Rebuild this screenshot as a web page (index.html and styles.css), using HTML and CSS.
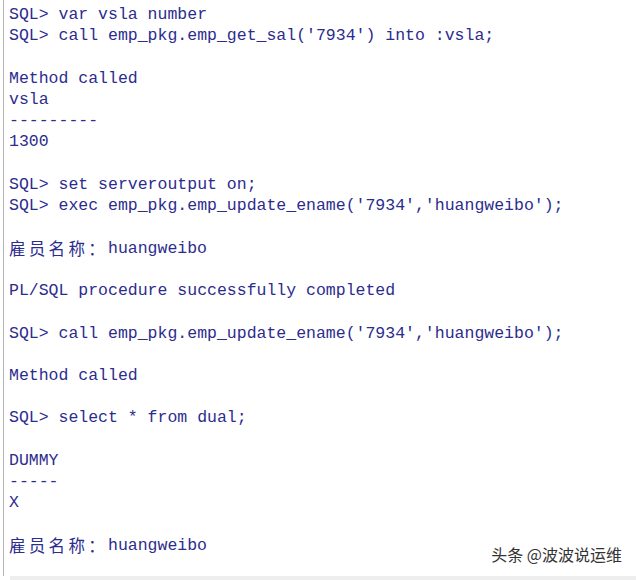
FILE: index.html
```html
<!DOCTYPE html>
<html>
<head>
<meta charset="utf-8">
<link rel="stylesheet" href="styles.css">
</head>
<body>
<div class="frame">
<div class="console">
<div class="ln">SQL&gt; var vsla number</div>
<div class="ln">SQL&gt; call emp_pkg.emp_get_sal('7934') into :vsla;</div>
<div class="ln"></div>
<div class="ln">Method called</div>
<div class="ln">vsla</div>
<div class="ln">---------</div>
<div class="ln">1300</div>
<div class="ln"></div>
<div class="ln">SQL&gt; set serveroutput on;</div>
<div class="ln">SQL&gt; exec emp_pkg.emp_update_ename('7934','huangweibo');</div>
<div class="ln"></div>
<div class="ln row"><span class="cjk">雇员名称：</span><span>huangweibo</span></div>
<div class="ln"></div>
<div class="ln">PL/SQL procedure successfully completed</div>
<div class="ln"></div>
<div class="ln">SQL&gt; call emp_pkg.emp_update_ename('7934','huangweibo');</div>
<div class="ln"></div>
<div class="ln">Method called</div>
<div class="ln"></div>
<div class="ln">SQL&gt; select * from dual;</div>
<div class="ln"></div>
<div class="ln">DUMMY</div>
<div class="ln">-----</div>
<div class="ln">X</div>
<div class="ln"></div>
<div class="ln row"><span class="cjk">雇员名称：</span><span>huangweibo</span></div>
</div>
<div class="watermark">头条 @波波说运维</div>
</div>
<div class="bottom-bar"></div>
</body>
</html>
```

FILE: styles.css
```css
html, body {
  margin: 0;
  padding: 0;
  background: #ffffff;
  width: 636px;
  height: 580px;
  overflow: hidden;
}
.frame {
  position: relative;
  height: 576px;
  margin-left: 3px;
  border-left: 1px solid #b4b4b4;
}
.console {
  padding: 4px 0 0 5px;
  font-family: "Liberation Mono", "Courier New", monospace;
  font-size: 16.5px;
  color: #2c2c8e;
}
.ln {
  height: 21.24px;
  line-height: 21.24px;
  white-space: pre;
}
.row {
  display: flex;
  align-items: center;
}
.cjk {
  flex: none;
  font-family: "Noto Sans CJK SC", sans-serif;
  font-size: 16.5px;
  line-height: 21px;
  letter-spacing: 3.3px;
}
.watermark {
  position: absolute;
  right: 14px;
  bottom: 10px;
  font-family: "Noto Sans CJK SC", sans-serif;
  font-size: 16px;
  color: #333333;
}
.bottom-bar {
  margin-left: 10px;
  height: 4px;
  background: #eeeeee;
}
```
